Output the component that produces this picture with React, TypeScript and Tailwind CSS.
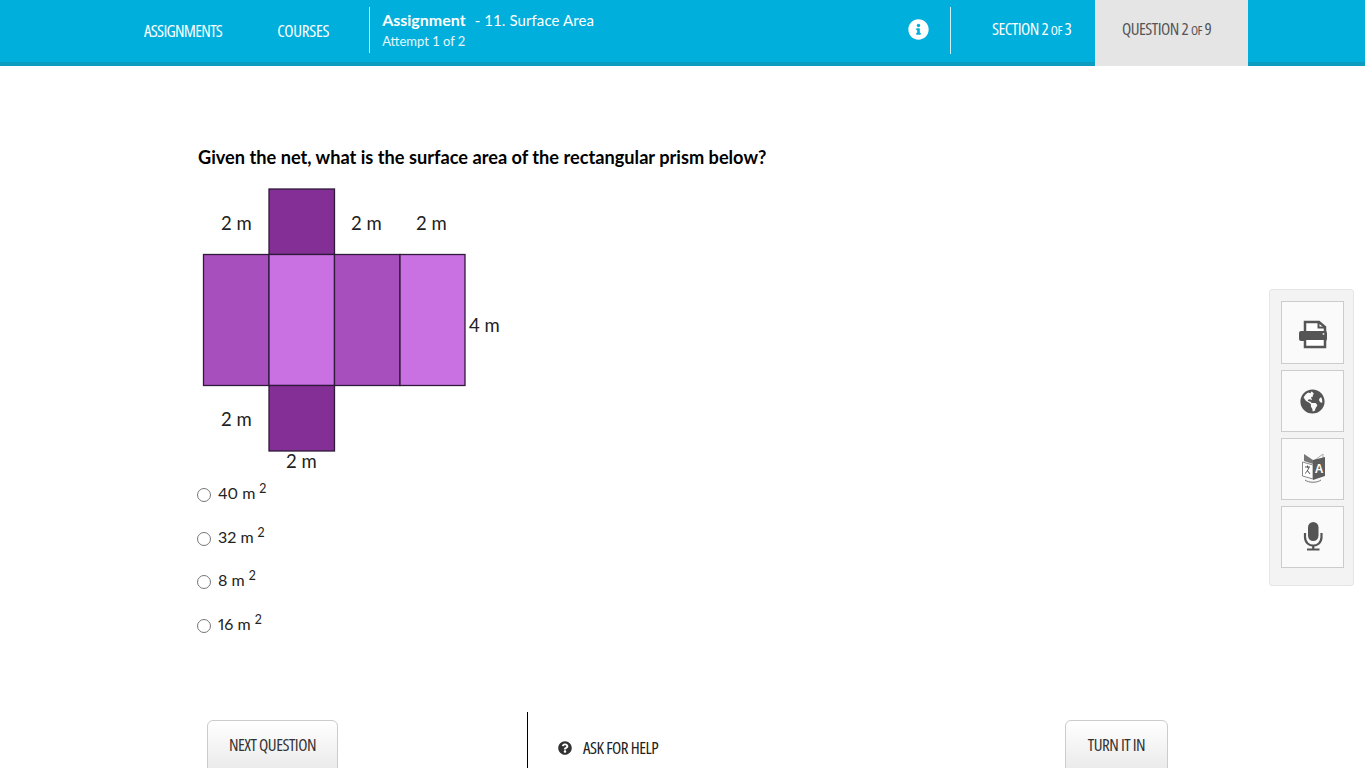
import { FaGlobeAmericas, FaInfoCircle, FaQuestionCircle } from "react-icons/fa";

const narrow = "font-['Open_Sans',sans-serif] font-medium font-stretch-[75%] tracking-[-0.5px] whitespace-nowrap";

const answers = [
  { label: "40 m", height: "h-[44px]" },
  { label: "32 m", height: "h-[43px]" },
  { label: "8 m", height: "h-[44px]" },
  { label: "16 m", height: "h-[44px]" },
];

function PrintIcon() {
  return (
    <svg width="46" height="40" viewBox="0 0 46 40">
      <path d="M15 19V9h14l6 5v5" fill="#fff" stroke="#555" strokeWidth="2.5" />
      <path d="M28.500 9v5.500H35" fill="none" stroke="#555" strokeWidth="2" />
      <rect x="9" y="18" width="28" height="10" rx="2" fill="#555" />
      <circle cx="33.500" cy="21" r="1" fill="#ddd" />
      <path d="M15 27v7h20v-7" fill="#fff" stroke="#555" strokeWidth="2.5" />
    </svg>
  );
}

function TranslateIcon() {
  return (
    <svg width="46" height="40" viewBox="0 0 46 40">
      <path d="M14 5l9 6v4l-9-3z" fill="#777" />
      <path d="M33 5l-8 6h8z" fill="none" stroke="#aaa" strokeWidth="1" />
      <path d="M12.500 13l10.500 3v14l-10.500-3z" fill="#fff" stroke="#888" strokeWidth="1" />
      <path d="M23 11l12-3v19l-12 4z" fill="#5c5c5c" />
      <text x="29" y="24" fontSize="12" fontWeight="700" fill="#fff" textAnchor="middle" fontFamily="Liberation Sans, sans-serif">A</text>
      <path d="M15 18h5M17.500 16.500v2M19 18c-1 3-2 5-4 6.500M17 21l3 4" stroke="#555" strokeWidth="1" fill="none" />
      <path d="M15 31c4 3 12 3 16 0" stroke="#777" strokeWidth="1" fill="none" />
    </svg>
  );
}

function MicIcon() {
  return (
    <svg width="46" height="40" viewBox="0 0 46 40">
      <rect x="18" y="5" width="10.500" height="19" rx="5.250" fill="#555" />
      <path d="M15 16v4c0 11.500 16.500 11.500 16.500 0v-4" fill="none" stroke="#555" strokeWidth="2.200" />
      <path d="M23.250 28v4M17 32.500h12.500" stroke="#555" strokeWidth="2.200" fill="none" />
    </svg>
  );
}

function Net() {
  const label = "fill-[#222] text-[18.5px] font-['Lato',sans-serif]";
  return (
    <svg width="320" height="292" viewBox="0 0 320 292" className="block">
      <g stroke="#2f1a3a" strokeWidth="1.3">
        <rect x="79" y="9" width="65.5" height="65.5" fill="#832f96" />
        <rect x="13.5" y="74.5" width="65.5" height="131" fill="#a74fbd" />
        <rect x="79" y="74.5" width="65.5" height="131" fill="#c971e3" />
        <rect x="144.5" y="74.5" width="65.5" height="131" fill="#a74fbd" />
        <rect x="210" y="74.5" width="65" height="131" fill="#c971e3" />
        <rect x="79" y="205.5" width="65.5" height="65.5" fill="#832f96" />
      </g>
      <text x="31" y="50" className={label}>2 m</text>
      <text x="161" y="50" className={label}>2 m</text>
      <text x="226" y="50" className={label}>2 m</text>
      <text x="279" y="152" className={label}>4 m</text>
      <text x="31" y="246" className={label}>2 m</text>
      <text x="96" y="288" className={label}>2 m</text>
    </svg>
  );
}

export default function App() {
  return (
    <div className="relative h-screen overflow-hidden bg-white font-['Lato',sans-serif] text-black">
      <header className="flex h-[66px] border-b-4 border-[#0d9cc0] bg-[#00afdb] pl-[144px] text-white">
        <nav className={`flex items-center gap-[55px] pb-[1px] text-[17px] ${narrow}`}>
          <span className="tracking-[-0.7px]">ASSIGNMENTS</span>
          <span className="tracking-[-0.3px]">COURSES</span>
        </nav>
        <div className="mt-[7px] ml-[40px] h-[46px] w-px bg-white/80" />
        <div className="ml-[12px] pt-[10px]">
          <div className="text-[15px] leading-[20px]">
            <span className="text-[16px] font-bold">Assignment</span>
            <span className="ml-[9px] tracking-[0.1px]">- 11. Surface Area</span>
          </div>
          <div className="mt-[1px] text-[13px] leading-[20px] text-white/90">Attempt 1 of 2</div>
        </div>
        <div className="ml-auto flex items-start">
          <FaInfoCircle className="mt-[19px] text-[21px]" />
          <div className="mt-[7px] ml-[21px] h-[47px] w-px bg-white/80" />
          <div className={`mt-[18px] ml-[41px] w-[103px] text-[17px] leading-[22px] ${narrow}`}>
            SECTION 2 <span className="text-[13px]">OF</span> 3
          </div>
          <div className={`h-[66px] w-[153px] bg-[#e5e5e5] pt-[18px] pl-[27px] text-[17px] leading-[22px] text-[#555] ${narrow}`}>
            QUESTION 2 <span className="text-[13px]">OF</span> 9
          </div>
          <div className="w-[117px]" />
        </div>
      </header>

      <main className="pl-[198px]">
        <h1 className="pt-[80px] text-[18.2px] leading-[22px] font-bold">
          Given the net, what is the surface area of the rectangular prism below?
        </h1>
        <div className="mt-[12px] -ml-[8px] h-[292px]">
          <Net />
        </div>
        <ul className="pt-[5px]">
          {answers.map((a) => (
            <li key={a.label} className={`-ml-[1px] flex items-start gap-[7px] pt-[6px] text-[16px] text-[#222] proportional-nums ${a.height}`}>
              <input type="radio" name="answer" className="mt-[5px] h-[14px] w-[14px] appearance-none rounded-full border border-[#777] bg-white" />
              <span className="leading-[20px]">
                {a.label}
                <sup className="top-0 ml-[4px] align-[6px] text-[12.500px] leading-none">2</sup>
              </span>
            </li>
          ))}
        </ul>
      </main>

      <footer className="absolute top-[712px] left-0 flex w-full items-start">
        <button className={`mt-[8px] ml-[207px] h-[60px] w-[131px] rounded-t-[6px] border border-[#ccc] bg-gradient-to-b from-white to-[#e6e6e6] pb-[10px] text-[17px] text-[#333] ${narrow}`}>
          NEXT QUESTION
        </button>
        <div className="ml-[189px] h-[56px] w-px bg-black" />
        <div className={`mt-[25px] ml-[30px] flex items-center gap-[11px] text-[17px] leading-[22px] text-[#222] ${narrow}`}>
          <FaQuestionCircle className="text-[14px] text-[#333]" />
          <span>ASK FOR HELP</span>
        </div>
        <button className={`mt-[8px] mr-[197px] ml-auto h-[60px] w-[103px] rounded-t-[6px] border border-[#ccc] bg-gradient-to-b from-white to-[#e6e6e6] pb-[10px] text-[17px] text-[#333] ${narrow}`}>
          TURN IT IN
        </button>
      </footer>

      <aside className="absolute top-[289px] right-[11px] flex w-[85px] flex-col gap-[6px] rounded-[3px] border border-[#e5e5e5] bg-[#f3f3f3] pt-[11px] pr-[9px] pb-[17px] pl-[11px]">
        <div className="flex h-[63px] items-center justify-center border border-[#ccc] bg-[#fafafa]"><PrintIcon /></div>
        <div className="flex h-[62px] items-center justify-center border border-[#ccc] bg-[#fafafa] text-[#555]"><FaGlobeAmericas className="text-[25px]" /></div>
        <div className="flex h-[62px] items-center justify-center border border-[#ccc] bg-[#fafafa]"><TranslateIcon /></div>
        <div className="flex h-[62px] items-center justify-center border border-[#ccc] bg-[#fafafa]"><MicIcon /></div>
      </aside>
    </div>
  );
}
